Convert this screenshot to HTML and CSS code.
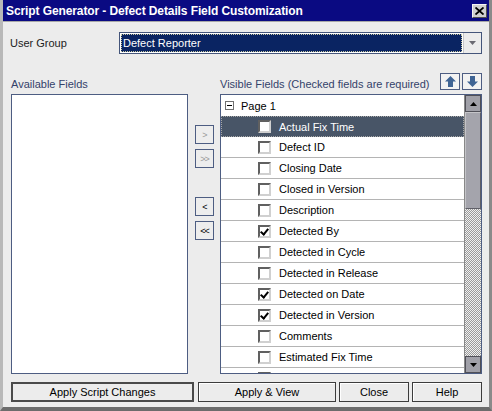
FILE: index.html
```html
<!DOCTYPE html>
<html lang="en">
<head>
    <meta charset="UTF-8">
    <title>Script Generator - Defect Details Field Customization</title>
    <link rel="stylesheet" href="styles.css">
</head>
<body>
    <div class="window">
        <div class="titlebar">
            <span class="title">Script Generator - Defect Details Field Customization</span>
            <span class="close-btn">
                <svg width="9" height="8" viewBox="0 0 9 8"><path d="M0.5 0.5 L8.5 7.5 M8.5 0.5 L0.5 7.5" stroke="#000" stroke-width="1.8"/></svg>
            </span>
        </div>
        <div class="content">
            <div class="group-row">
                <span class="group-label">User Group</span>
                <div class="combo">
                    <div class="combo-value"><span>Defect Reporter</span></div>
                    <div class="combo-arrow">
                        <svg width="7" height="4" viewBox="0 0 7 4"><path d="M0 0 H7 L3.5 4 Z" fill="#6a6a72"/></svg>
                    </div>
                </div>
            </div>

            <div class="fields">
                <div class="col-head">Available Fields</div>
                <div></div>
                <div class="col-head right-head">
                    <span>Visible Fields (Checked fields are required)</span>
                    <div class="order-btns">
                        <span class="order-btn">
                            <svg width="13" height="13" viewBox="0 0 13 13"><path d="M6.5 1 L12 6.5 L9 6.5 L9 12 L4 12 L4 6.5 L1 6.5 Z" fill="#3f6494"/></svg>
                        </span>
                        <span class="order-btn">
                            <svg width="13" height="13" viewBox="0 0 13 13"><path d="M4 1 L9 1 L9 6.5 L12 6.5 L6.5 12 L1 6.5 L4 6.5 Z" fill="#3f6494"/></svg>
                        </span>
                    </div>
                </div>

                <div class="listbox"></div>

                <div class="move-btns">
                    <span class="move-btn disabled">&gt;</span>
                    <span class="move-btn disabled">&gt;&gt;</span>
                    <span class="move-btn spaced">&lt;</span>
                    <span class="move-btn">&lt;&lt;</span>
                </div>

                <div class="tree">
                    <div class="tree-rows">
                        <div class="row page-row">
                            <span class="minus-box"></span>
                            <span>Page 1</span>
                        </div>
                        <div class="row selected"><span class="check"></span><span>Actual Fix Time</span></div>
                        <div class="row"><span class="check"></span><span>Defect ID</span></div>
                        <div class="row"><span class="check"></span><span>Closing Date</span></div>
                        <div class="row"><span class="check"></span><span>Closed in Version</span></div>
                        <div class="row"><span class="check"></span><span>Description</span></div>
                        <div class="row"><span class="check checked"></span><span>Detected By</span></div>
                        <div class="row"><span class="check"></span><span>Detected in Cycle</span></div>
                        <div class="row"><span class="check"></span><span>Detected in Release</span></div>
                        <div class="row"><span class="check checked"></span><span>Detected on Date</span></div>
                        <div class="row"><span class="check checked"></span><span>Detected in Version</span></div>
                        <div class="row"><span class="check"></span><span>Comments</span></div>
                        <div class="row"><span class="check"></span><span>Estimated Fix Time</span></div>
                        <div class="row"><span class="check"></span></div>
                    </div>
                    <div class="scrollbar">
                        <span class="sb-btn">
                            <svg width="7" height="4" viewBox="0 0 7 4"><path d="M0 4 H7 L3.5 0 Z" fill="#000"/></svg>
                        </span>
                        <span class="sb-thumb"></span>
                        <span class="sb-track"></span>
                        <span class="sb-btn">
                            <svg width="7" height="4" viewBox="0 0 7 4"><path d="M0 0 H7 L3.5 4 Z" fill="#000"/></svg>
                        </span>
                    </div>
                </div>
            </div>

            <div class="actions">
                <span class="btn default">Apply Script Changes</span>
                <span class="btn wide">Apply &amp; View</span>
                <span class="btn small">Close</span>
                <span class="btn small">Help</span>
            </div>
        </div>
    </div>
</body>
</html>
```

FILE: styles.css
```css
body {
    margin: 0;
    padding: 0;
    background: #ececec;
    font-family: "Liberation Sans", Arial, sans-serif;
    font-size: 11px;
    color: #000;
}
.window {
    width: 492px;
    height: 411px;
    box-sizing: border-box;
    display: flex;
    flex-direction: column;
    border-left: 3px solid #b8b8b8;
    border-right: 3px solid #8a8a8a;
    border-bottom: 4px solid #6c6c6c;
    background: #ececec;
}
.titlebar {
    height: 21px;
    background: #0a0a82;
    border-bottom: 1px solid #a8a8a8;
    display: flex;
    align-items: center;
    justify-content: space-between;
    padding: 0 2px 0 3px;
}
.title {
    color: #fff;
    font-weight: bold;
    font-size: 12px;
    letter-spacing: -0.1px;
}
.close-btn {
    width: 15px;
    height: 14px;
    box-sizing: border-box;
    background: #d0d0d0;
    border: 1px solid;
    border-color: #f4f4f4 #505050 #505050 #f4f4f4;
    display: flex;
    align-items: center;
    justify-content: center;
}
.content {
    flex: 1;
    padding: 0 7px 0 8px;
}
.group-row {
    display: flex;
    align-items: center;
    margin-top: 10px;
    height: 22px;
}
.group-label {
    width: 109px;
    color: #222;
    margin-left: -1px;
}
.combo {
    flex: 1;
    height: 22px;
    box-sizing: border-box;
    border: 1px solid #44557a;
    background: #fff;
    display: flex;
}
.combo-value {
    flex: 1;
    padding: 1px;
}
.combo-value span {
    display: flex;
    align-items: center;
    height: 100%;
    box-sizing: border-box;
    background: #0a2462;
    color: #fff;
    border: 1px dotted #c8c8a0;
    padding-left: 1px;
}
.combo-arrow {
    width: 17px;
    background: #ececec;
    border-left: 1px solid #c8c8c8;
    display: flex;
    align-items: center;
    justify-content: center;
}
.fields {
    display: grid;
    grid-template-columns: 177px 32px 262px;
    grid-template-rows: 21px 280px;
    margin-top: 19px;
}
.col-head {
    color: #34426a;
    display: flex;
    align-items: flex-end;
    padding-bottom: 4px;
    box-sizing: border-box;
}
.right-head {
    justify-content: space-between;
}
.order-btns {
    display: flex;
    gap: 2px;
    align-self: flex-start;
    margin-bottom: -4px;
}
.order-btn {
    width: 20px;
    height: 17px;
    box-sizing: border-box;
    border: 1px solid #4d5d82;
    background: #f2f2f2;
    display: flex;
    align-items: center;
    justify-content: center;
}
.listbox {
    background: #fff;
    border: 1px solid #4d5d82;
}
.move-btns {
    display: flex;
    flex-direction: column;
    align-items: center;
    gap: 5px;
    padding-top: 31px;
    padding-left: 1px;
}
.move-btn {
    width: 19px;
    height: 19px;
    box-sizing: border-box;
    border: 1px solid #4d5d82;
    background: #ededed;
    font-size: 9px;
    display: flex;
    align-items: center;
    justify-content: center;
    letter-spacing: -1px;
}
.move-btn.disabled {
    color: #9a9a9a;
}
.move-btn.spaced {
    margin-top: 24px;
}
.tree {
    border: 1px solid #4d5d82;
    background: #fff;
    display: flex;
    overflow: hidden;
}
.tree-rows {
    flex: 1;
    overflow: hidden;
}
.row {
    height: 21px;
    box-sizing: border-box;
    border-bottom: 1px solid #b4b4b4;
    display: flex;
    align-items: center;
    padding-left: 37px;
    gap: 8px;
}
.page-row {
    padding-left: 4px;
    border-bottom: none;
    gap: 7px;
}
.minus-box {
    width: 9px;
    height: 9px;
    box-sizing: border-box;
    border: 1px solid #707070;
    position: relative;
}
.minus-box::after {
    content: "";
    position: absolute;
    left: 1px;
    right: 1px;
    top: 3px;
    height: 1px;
    background: #000;
}
.row.selected {
    background: #485567;
    color: #fff;
    border: 1px dotted #a8a8a8;
    padding-left: 36px;
}
.check {
    width: 13px;
    height: 13px;
    box-sizing: border-box;
    background: #fff;
    border: 2px solid;
    border-color: #606060 #d0d0d0 #d0d0d0 #606060;
    position: relative;
}
.check.checked::after {
    content: "";
    position: absolute;
    left: 2px;
    top: 0;
    width: 3px;
    height: 6px;
    border: solid #000;
    border-width: 0 2px 2px 0;
    transform: rotate(40deg);
}
.scrollbar {
    width: 16px;
    display: flex;
    flex-direction: column;
    border-left: 1px solid #888;
}
.sb-btn {
    height: 17px;
    box-sizing: border-box;
    background: #a0a0a8;
    border: 1px solid #505058;
    display: flex;
    align-items: center;
    justify-content: center;
}
.sb-thumb {
    height: 97px;
    box-sizing: border-box;
    background: #a4a4ac;
    border: 1px solid;
    border-color: #c4c4c8 #606068 #606068 #c4c4c8;
}
.sb-track {
    flex: 1;
    background: repeating-conic-gradient(#9a9a9a 0 25%, #f0f0f0 0 50%) 0 0 / 2px 2px;
}
.actions {
    display: flex;
    gap: 3px;
    margin-top: 8px;
}
.btn {
    height: 20px;
    box-sizing: border-box;
    border: 1px solid #3c3c3c;
    box-shadow: inset 1px 1px #fff;
    background: #ececec;
    display: flex;
    align-items: center;
    justify-content: center;
}
.btn.default {
    width: 183px;
    margin-right: 1px;
    border: 2px solid #4a4a4a;
    box-shadow: none;
}
.btn.wide {
    width: 138px;
}
.btn.small {
    width: 70px;
}
```
